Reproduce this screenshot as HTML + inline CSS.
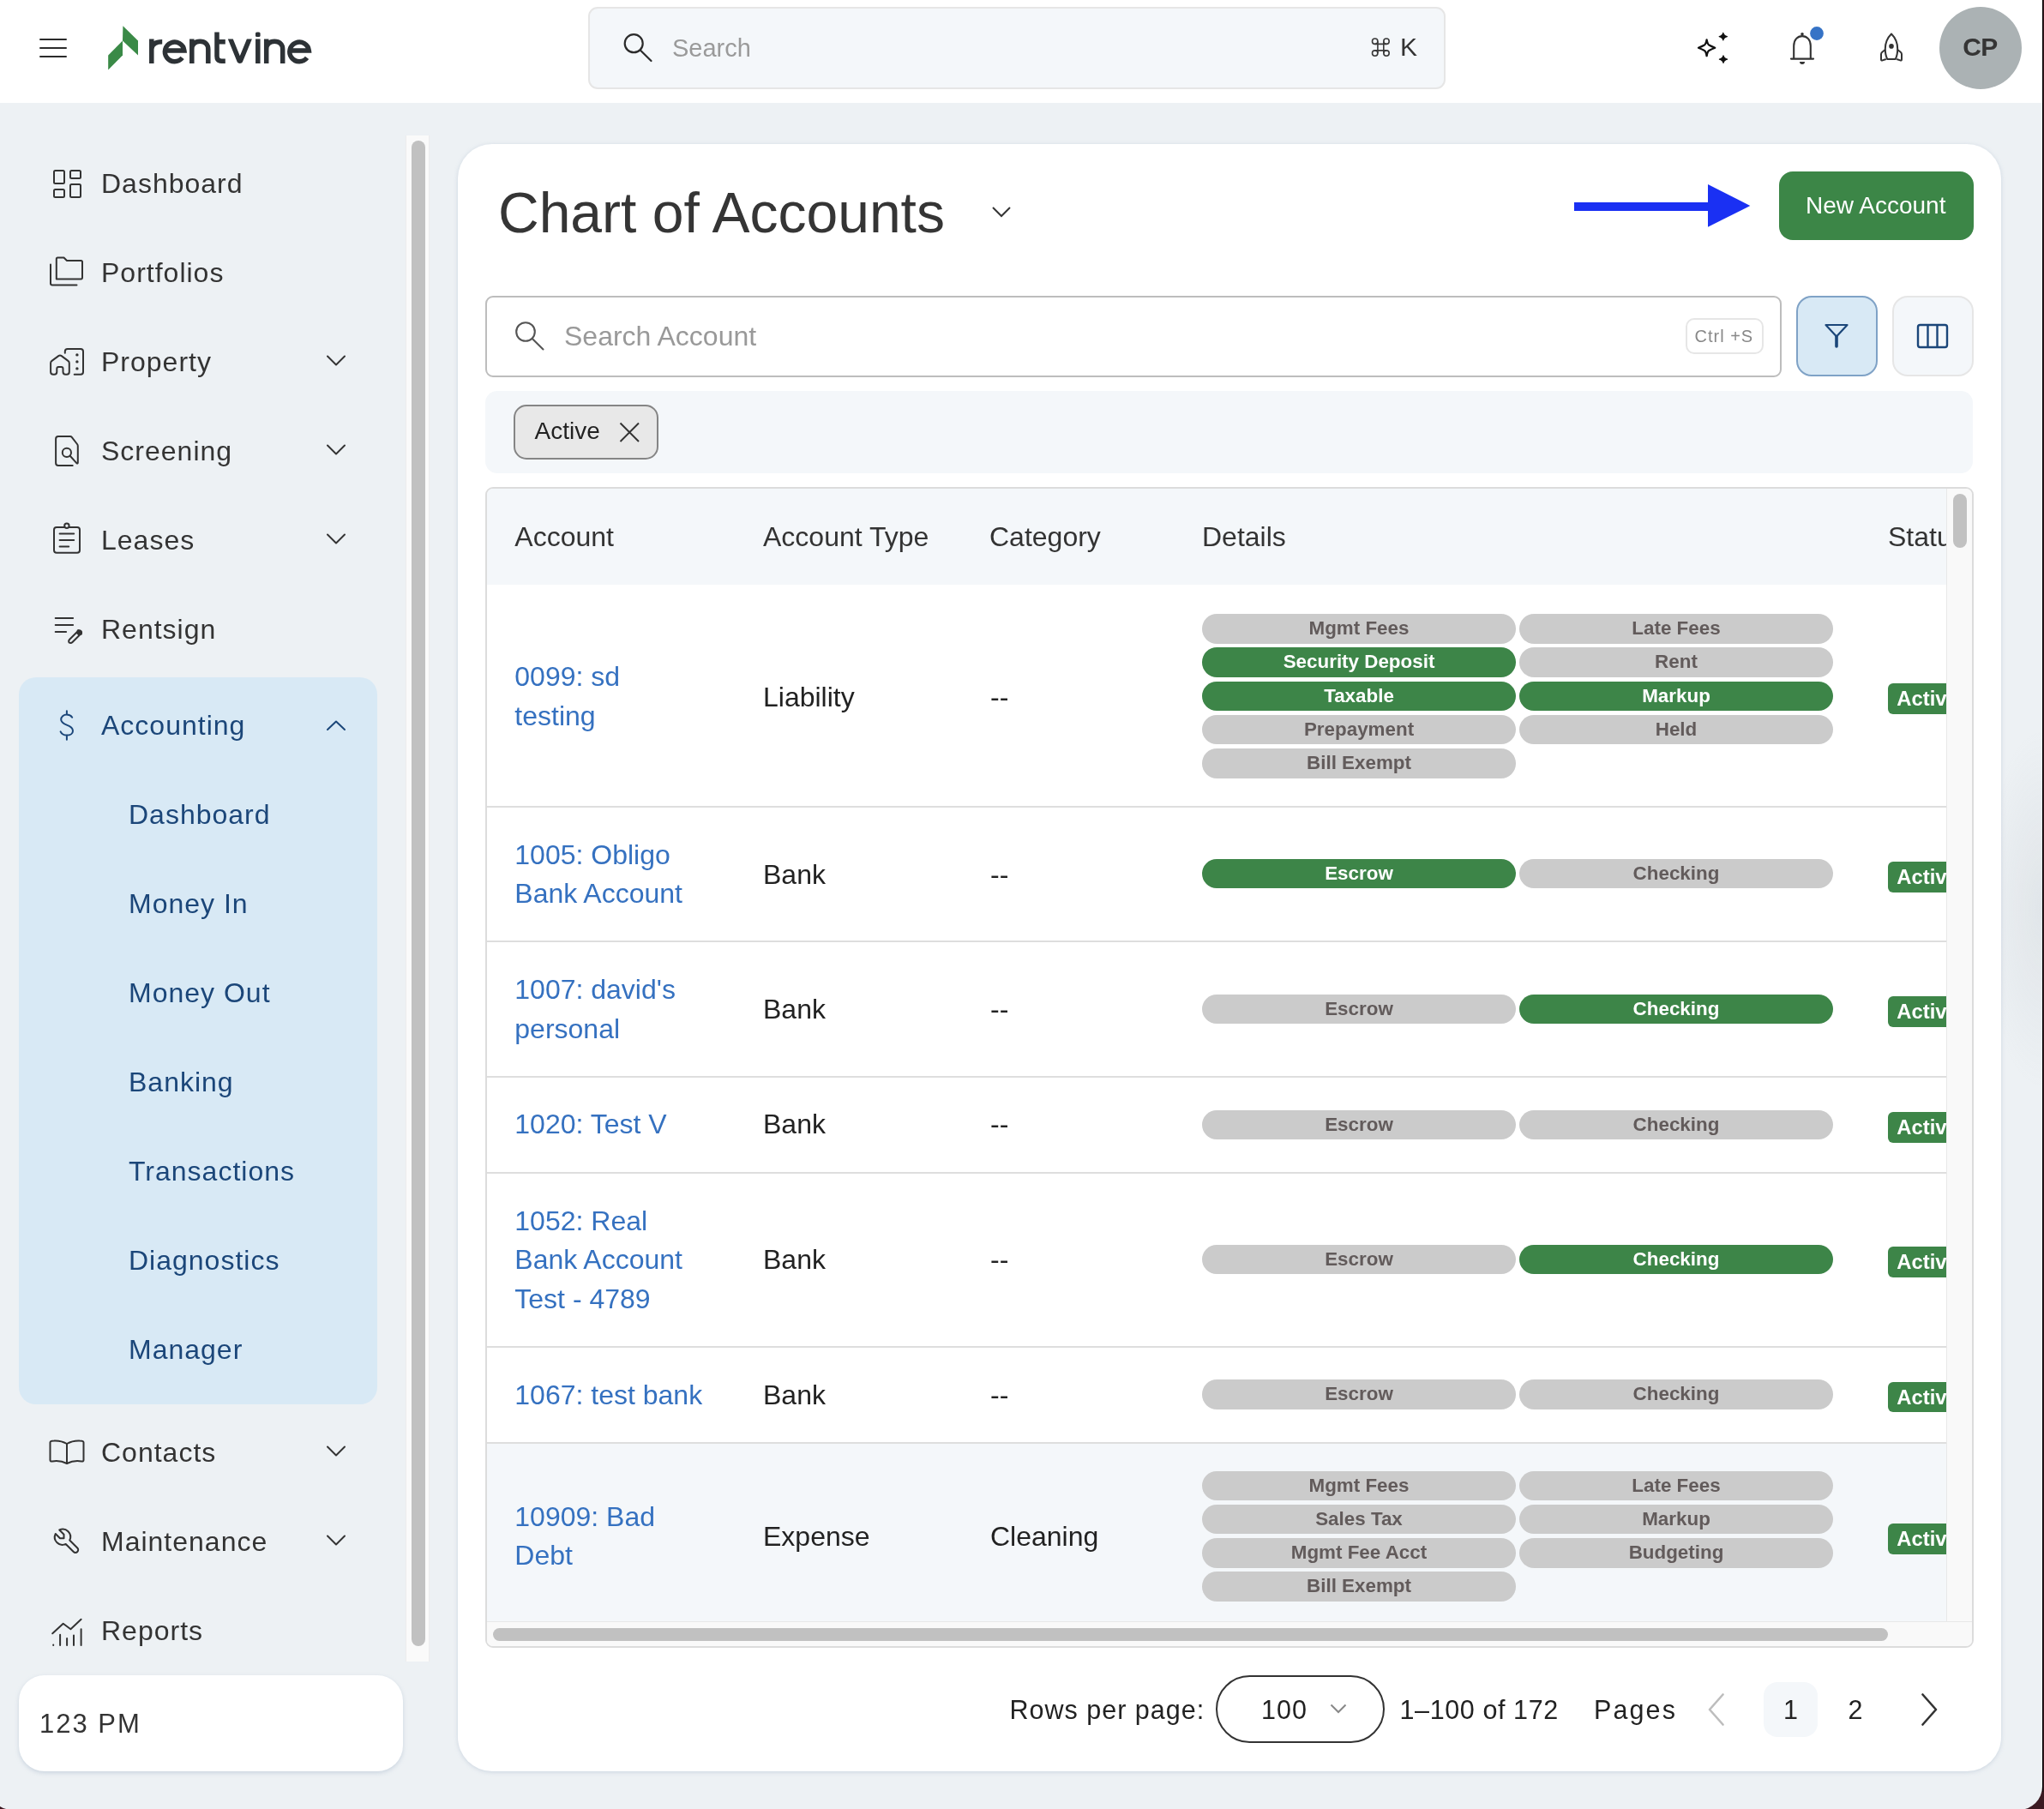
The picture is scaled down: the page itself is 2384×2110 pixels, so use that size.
<!DOCTYPE html>
<html><head><meta charset="utf-8"><style>
html,body{margin:0;padding:0;width:2384px;height:2110px;overflow:hidden;background:#3b1a22}
.win{position:absolute;left:-13px;top:0;width:2395px;height:2111px;background:#edf1f4;border-radius:0 0 27px 27px;overflow:hidden}
.inner{position:absolute;left:13px;top:0;width:2382px;height:2111px;will-change:transform}
.t{position:absolute;white-space:nowrap;font-family:'Liberation Sans', sans-serif}
</style></head><body>
<div style="position:absolute;left:2381.5px;top:0;width:1.5px;height:2090px;background:#000"></div>
<div class="win"><div class="inner">
<div style="position:absolute;left:0px;top:0px;width:2382px;height:120px;background:#fff"></div><div style="position:absolute;left:46px;top:45.2px;width:32px;height:2.200000000000003px;background:#2b2b2b;border-radius:2px"></div><div style="position:absolute;left:46px;top:55px;width:32px;height:2.200000000000003px;background:#2b2b2b;border-radius:2px"></div><div style="position:absolute;left:46px;top:64.5px;width:32px;height:2.200000000000003px;background:#2b2b2b;border-radius:2px"></div><svg style="position:absolute;left:120px;top:25px;" width="50" height="62" viewBox="0 0 50 62"><path d="M23.4 5.3 L41 22.4 L41 39.5 L23 22.4 Z" fill="#3a8a47"/><path d="M23 22.4 L23 39.5 L6.2 56.6 L6.2 39.5 Z" fill="#3a8a47"/></svg><svg style="position:absolute;left:165px;top:30px;" width="205" height="55" viewBox="0 0 205 55"><g fill="none" stroke="#2d3236" stroke-width="5.5"><path d="M11.8 73.9 L11.8 45.6 M11.8 57 Q12.5 48.7 24.2 48.7" transform="translate(0,-30)"/><path d="M27.6 59 L49.9 59 A11.3 11.3 0 1 0 47.6 67.4" transform="translate(0,-30)"/><path d="M58.8 73.9 L58.8 45.6 M58.8 57.5 C58.8 51.5 62.5 48.25 68.3 48.25 C74.1 48.25 77.8 51.5 77.8 57.5 L77.8 73.9" transform="translate(0,-30)"/><path d="M88 37.5 L88 65.5 Q88 71.2 93.5 71.2 L97.8 71.2 M85.3 48.7 L97.8 48.7" transform="translate(0,-30)"/></g><path d="M100.8 15.5 L106.8 15.5 L114.8 35.2 L122.9 15.5 L128.9 15.5 L117.8 42.6 Q117 43.9 114.8 43.9 Q112.6 43.9 111.8 42.6 Z" fill="#2d3236"/><g fill="none" stroke="#2d3236" stroke-width="5.5"><path d="M135.8 45.6 L135.8 73.9 M145.7 73.9 L145.7 45.6 M145.7 57.5 C145.7 51.5 149.4 48.25 155.2 48.25 C161 48.25 164.7 51.5 164.7 57.5 L164.7 73.9" transform="translate(0,-30)"/><path d="M173.1 59 L195.35 59 A11.3 11.3 0 1 0 193.05 67.4" transform="translate(0,-30)"/></g><rect x="133" y="7.5" width="5.6" height="5.5" rx="1.6" fill="#2d3236"/></svg><div style="position:absolute;left:686px;top:8px;width:1000px;height:96px;box-sizing:border-box;border:2px solid #e6e6e6;background:#f4f7fa;border-radius:11px"></div><svg style="position:absolute;left:724px;top:36px;" width="40" height="40" viewBox="0 0 40 40"><circle cx="15.2" cy="14.7" r="10.5" fill="none" stroke="#2b2b2b" stroke-width="2.2"/><path d="M22.8 22.5 L35.5 35" stroke="#2b2b2b" stroke-width="2.2" stroke-linecap="round"/></svg><div class="t" style="left:784.0px;top:41.9px;font-size:29px;line-height:29px;color:#9a9a9a;font-weight:400;letter-spacing:0px;">Search</div><svg style="position:absolute;left:1598px;top:43px;" width="25" height="25" viewBox="0 0 25 25"><g fill="none" stroke="#3a3a3a" stroke-width="1.6"><path d="M8.9 5.2 L8.9 19.1 M15.8 5.2 L15.8 19.1 M5.7 8.4 L19 8.4 M5.7 15.9 L19 15.9"/><circle cx="5.7" cy="5.2" r="3.2"/><circle cx="19" cy="5.2" r="3.2"/><circle cx="5.7" cy="19.1" r="3.2"/><circle cx="19" cy="19.1" r="3.2"/></g></svg><div class="t" style="left:1633.0px;top:39.6px;font-size:30px;line-height:30px;color:#333;font-weight:400;letter-spacing:0px;">K</div><svg style="position:absolute;left:1975px;top:35px;" width="45" height="45" viewBox="0 0 45 45"><path d="M15.6 11.4 Q16.6 17 18.7 17.8 Q21 19.1 25.2 20.8 Q21 22.5 18.7 23.8 Q16.6 24.6 15.6 30.2 Q14.6 24.6 12.5 23.8 Q10.2 22.5 6 20.8 Q10.2 19.1 12.5 17.8 Q14.6 17 15.6 11.4 Z" fill="none" stroke="#111" stroke-width="2.3" stroke-linejoin="round"/><path d="M34.8 3.4 Q35.3 6.6 39.4 7.7 Q35.3 8.8 34.8 12 Q34.3 8.8 30.2 7.7 Q34.3 6.6 34.8 3.4 Z" fill="#111" stroke="#111" stroke-width="1.2" stroke-linejoin="round"/><path d="M35 29.9 Q35.5 33.1 39.6 34.2 Q35.5 35.3 35 38.5 Q34.5 35.3 30.4 34.2 Q34.5 33.1 35 29.9 Z" fill="#111" stroke="#111" stroke-width="1.2" stroke-linejoin="round"/></svg><svg style="position:absolute;left:2080px;top:30px;" width="50" height="50" viewBox="0 0 50 50"><path d="M12.2 38.6 L12.2 23.5 C12.2 16.5 16.5 12.1 22 12.1 C27.5 12.1 31.8 16.5 31.8 23.5 L31.8 38.6" fill="none" stroke="#333" stroke-width="2.1"/><path d="M9 38.6 L35 38.6" stroke="#333" stroke-width="2.2" stroke-linecap="round"/><path d="M19 41.9 L25 41.9 A3 3 0 0 1 19 41.9 Z" fill="#333"/><circle cx="22" cy="9.8" r="1.8" fill="#333"/><circle cx="39" cy="9" r="7.9" fill="#3673c6"/></svg><svg style="position:absolute;left:2185px;top:33px;" width="42" height="44" viewBox="0 0 42 44"><path d="M21 6.5 C25.5 11 28.2 17 28.2 24 C28.2 29 27.3 33 25.7 36 L16.3 36 C14.7 33 13.8 29 13.8 24 C13.8 17 16.5 11 21 6.5 Z" fill="none" stroke="#333" stroke-width="2" stroke-linejoin="round"/><circle cx="21" cy="20.9" r="2.8" fill="#333"/><path d="M13.8 25 L10.3 27.7 Q9 28.7 9 30.3 L9 36.3 Q9 38 10.7 37.4 L14.8 36" fill="none" stroke="#333" stroke-width="2" stroke-linejoin="round"/><path d="M28.2 25 L31.7 27.7 Q33 28.7 33 30.3 L33 36.3 Q33 38 31.3 37.4 L27.2 36" fill="none" stroke="#333" stroke-width="2" stroke-linejoin="round"/></svg><div style="position:absolute;left:2262px;top:8px;width:96px;height:96px;background:#abb2b4;border-radius:50%"></div><div class="t" style="left:2289.3px;top:39.8px;font-size:30px;line-height:30px;color:#353535;font-weight:700;letter-spacing:-0.6px;">CP</div><div style="position:absolute;left:472.6px;top:157.7px;width:28.899999999999977px;height:1780.3px;background:#fafafa;border-left:1.5px solid #ececec;border-right:1.5px solid #ececec;box-sizing:border-box"></div><div style="position:absolute;left:480px;top:164px;width:16px;height:1756px;background:#c1c1c1;border-radius:8px"></div><div class="t" style="left:118.0px;top:198.1px;font-size:32px;line-height:32px;color:#333;font-weight:400;letter-spacing:1px;">Dashboard</div><div class="t" style="left:118.0px;top:301.8px;font-size:32px;line-height:32px;color:#333;font-weight:400;letter-spacing:1px;">Portfolios</div><div class="t" style="left:118.0px;top:406.3px;font-size:32px;line-height:32px;color:#333;font-weight:400;letter-spacing:1px;">Property</div><div class="t" style="left:118.0px;top:509.8px;font-size:32px;line-height:32px;color:#333;font-weight:400;letter-spacing:1px;">Screening</div><div class="t" style="left:118.0px;top:613.5px;font-size:32px;line-height:32px;color:#333;font-weight:400;letter-spacing:1px;">Leases</div><div class="t" style="left:118.0px;top:717.8px;font-size:32px;line-height:32px;color:#333;font-weight:400;letter-spacing:1px;">Rentsign</div><svg style="position:absolute;left:378px;top:412.4px;" width="28" height="16" viewBox="0 0 28 16"><path d="M4 3.5 L14 13.5 L24 3.5" fill="none" stroke="#333" stroke-width="2" stroke-linecap="round" stroke-linejoin="round"/></svg><svg style="position:absolute;left:378px;top:515.9px;" width="28" height="16" viewBox="0 0 28 16"><path d="M4 3.5 L14 13.5 L24 3.5" fill="none" stroke="#333" stroke-width="2" stroke-linecap="round" stroke-linejoin="round"/></svg><svg style="position:absolute;left:378px;top:619.6px;" width="28" height="16" viewBox="0 0 28 16"><path d="M4 3.5 L14 13.5 L24 3.5" fill="none" stroke="#333" stroke-width="2" stroke-linecap="round" stroke-linejoin="round"/></svg><svg style="position:absolute;left:58px;top:194px;" width="40" height="40" viewBox="0 0 40 40"><rect x="5" y="5" width="12" height="15" rx="1.5" fill="none" stroke="#333" stroke-width="2" stroke-linejoin="round" stroke-linecap="round"/><rect x="24" y="5" width="12" height="9" rx="1.5" fill="none" stroke="#333" stroke-width="2" stroke-linejoin="round" stroke-linecap="round"/><rect x="5" y="27" width="12" height="9" rx="1.5" fill="none" stroke="#333" stroke-width="2" stroke-linejoin="round" stroke-linecap="round"/><rect x="24" y="21" width="12" height="15" rx="1.5" fill="none" stroke="#333" stroke-width="2" stroke-linejoin="round" stroke-linecap="round"/></svg><svg style="position:absolute;left:56px;top:296px;" width="44" height="40" viewBox="0 0 44 40"><path d="M9.8 29.5 L9.8 6 Q9.8 4.5 11.3 4.5 L18.5 4.5 L22 8 L38.5 8 Q40 8 40 9.5 L40 27.5 Q40 29.5 38.5 29.5 Z" fill="none" stroke="#333" stroke-width="2" stroke-linejoin="round" stroke-linecap="round"/><path d="M3 12.5 L3 34.5 Q3 36.5 5 36.5 L33.5 36.5" fill="none" stroke="#333" stroke-width="2" stroke-linejoin="round" stroke-linecap="round"/></svg><svg style="position:absolute;left:55px;top:402px;" width="46" height="40" viewBox="0 0 46 40"><path d="M7.1 34.8 Q4.1 34.8 4.1 31.8 L4.1 21.6 Q4.1 19.9 5.5 18.9 L13.3 13.1 Q15 11.9 16.7 13.1 L24.4 18.9 Q25.8 19.9 25.8 21.6 L25.8 31.8 Q25.8 34.8 22.8 34.8 L21.5 34.8 Q18.5 34.8 18.5 31.8 L18.5 28 Q18.5 26 16.5 26 L13.3 26 Q11.3 26 11.3 28 L11.3 31.8 Q11.3 34.8 8.3 34.8 Z" fill="none" stroke="#333" stroke-width="2" stroke-linejoin="round" stroke-linecap="round"/><path d="M20.8 9.7 L20.8 8 Q20.8 5 23.8 5 L39 5 Q42 5 42 8 L42 31.8 Q42 34.8 39 34.8 L31.7 34.8" fill="none" stroke="#333" stroke-width="2" stroke-linejoin="round" stroke-linecap="round"/><circle cx="34.9" cy="11.9" r="1.7" fill="#333"/><circle cx="34.9" cy="19.9" r="1.7" fill="#333"/><circle cx="34.9" cy="27.9" r="1.7" fill="#333"/></svg><svg style="position:absolute;left:60px;top:504px;" width="36" height="44" viewBox="0 0 36 44"><path d="M24.7 39 L8 39 Q5.1 39 5.1 36 L5.1 8 Q5.1 5 8 5 L22 5 Q23 5 23.7 5.8 L30 14 Q30.8 15 30.8 16.3 L30.8 35.5 Q30.8 37.3 29.3 36.2 L21.5 27.5" fill="none" stroke="#333" stroke-width="2" stroke-linejoin="round" stroke-linecap="round"/><circle cx="17.9" cy="23.9" r="5.1" fill="none" stroke="#333" stroke-width="2" stroke-linejoin="round" stroke-linecap="round"/></svg><svg style="position:absolute;left:58px;top:606px;" width="40" height="44" viewBox="0 0 40 44"><rect x="5" y="8.9" width="30" height="29.9" rx="3" fill="none" stroke="#333" stroke-width="2" stroke-linejoin="round" stroke-linecap="round"/><circle cx="19.9" cy="7.3" r="2.7" fill="#edf1f4" stroke="#333" stroke-width="2"/><path d="M11.6 16.5 L28.2 16.5 M11.6 23.9 L28.2 23.9 M11.6 31.5 L22.2 31.5" fill="none" stroke="#333" stroke-width="2" stroke-linejoin="round" stroke-linecap="round"/></svg><svg style="position:absolute;left:58px;top:715px;" width="42" height="38" viewBox="0 0 42 38"><path d="M6.7 5.9 L27.1 5.9 M6.7 13.9 L27.1 13.9 M6.7 22 L19.1 22" fill="none" stroke="#333" stroke-width="2" stroke-linejoin="round" stroke-linecap="round"/><path d="M22.6 34.5 Q21.5 32.5 23.2 30.8 L33 21 Q34.6 19.4 36.3 21 Q37.9 22.6 36.3 24.2 L26.5 34 Q24.7 35.8 22.6 34.5 Z" fill="none" stroke="#333" stroke-width="2" stroke-linejoin="round" stroke-linecap="round"/><path d="M31.8 22.3 L35.2 25.7" stroke="#333" stroke-width="3.2"/><path d="M33.2 20.8 L36.4 24" stroke="#333" stroke-width="3.2" stroke-linecap="round"/></svg><div style="position:absolute;left:22px;top:790px;width:418px;height:848px;background:#d8e9f5;border-radius:20px"></div><div class="t" style="left:118.0px;top:830.3px;font-size:32px;line-height:32px;color:#1b4679;font-weight:400;letter-spacing:1px;">Accounting</div><svg style="position:absolute;left:60px;top:824px;" width="36" height="44" viewBox="0 0 36 44"><path d="M24.2 12.7 C22.8 10.6 20.6 9.6 17.9 9.6 C14 9.6 11.2 12 11.2 15.3 C11.2 19 14.5 20.3 17.9 21.6 C21.8 23 25 24.6 25 28.4 C25 31.6 22 33.6 17.9 33.6 C14.5 33.6 11.8 32 10.6 29.4 M17.9 5.3 L17.9 9.6 M17.9 33.6 L17.9 38.7" fill="none" stroke="#1b4679" stroke-width="2" stroke-linecap="round"/></svg><svg style="position:absolute;left:376px;top:831px;" width="32" height="28" viewBox="0 0 32 28"><path d="M6 20 L16 10.5 L26 20" fill="none" stroke="#1b4679" stroke-width="2" stroke-linecap="round" stroke-linejoin="round"/></svg><div class="t" style="left:150.0px;top:934.4px;font-size:32px;line-height:32px;color:#1b4679;font-weight:400;letter-spacing:1px;">Dashboard</div><div class="t" style="left:150.0px;top:1038.4px;font-size:32px;line-height:32px;color:#1b4679;font-weight:400;letter-spacing:1px;">Money In</div><div class="t" style="left:150.0px;top:1142.4px;font-size:32px;line-height:32px;color:#1b4679;font-weight:400;letter-spacing:1px;">Money Out</div><div class="t" style="left:150.0px;top:1246.4px;font-size:32px;line-height:32px;color:#1b4679;font-weight:400;letter-spacing:1px;">Banking</div><div class="t" style="left:150.0px;top:1350.4px;font-size:32px;line-height:32px;color:#1b4679;font-weight:400;letter-spacing:1px;">Transactions</div><div class="t" style="left:150.0px;top:1454.4px;font-size:32px;line-height:32px;color:#1b4679;font-weight:400;letter-spacing:1px;">Diagnostics</div><div class="t" style="left:150.0px;top:1558.4px;font-size:32px;line-height:32px;color:#1b4679;font-weight:400;letter-spacing:1px;">Manager</div><div class="t" style="left:118.0px;top:1677.6px;font-size:32px;line-height:32px;color:#333;font-weight:400;letter-spacing:1px;">Contacts</div><div class="t" style="left:118.0px;top:1781.5px;font-size:32px;line-height:32px;color:#333;font-weight:400;letter-spacing:1px;">Maintenance</div><div class="t" style="left:118.0px;top:1885.9px;font-size:32px;line-height:32px;color:#333;font-weight:400;letter-spacing:1px;">Reports</div><svg style="position:absolute;left:378px;top:1683.7px;" width="28" height="16" viewBox="0 0 28 16"><path d="M4 3.5 L14 13.5 L24 3.5" fill="none" stroke="#333" stroke-width="2" stroke-linecap="round" stroke-linejoin="round"/></svg><svg style="position:absolute;left:378px;top:1787.6px;" width="28" height="16" viewBox="0 0 28 16"><path d="M4 3.5 L14 13.5 L24 3.5" fill="none" stroke="#333" stroke-width="2" stroke-linecap="round" stroke-linejoin="round"/></svg><svg style="position:absolute;left:55px;top:1676px;" width="46" height="36" viewBox="0 0 46 36"><path d="M3.5 6.5 Q3.5 4.5 8 4.5 Q16 4 23 8 Q30 4 38 4.5 Q42.5 4.5 42.5 6.5 L42.5 27 Q42.5 29 40 28.5 Q31 27 23 31 Q15 27 6 28.5 Q3.5 29 3.5 27 Z" fill="none" stroke="#333" stroke-width="2" stroke-linejoin="round" stroke-linecap="round"/><path d="M23 8 L23 31" fill="none" stroke="#333" stroke-width="2" stroke-linejoin="round" stroke-linecap="round"/></svg><svg style="position:absolute;left:57px;top:1777px;" width="42" height="42" viewBox="0 0 42 42"><g transform="translate(2.5,2.2) scale(1.5)"><path d="M7 10h3v-3l-3.5 -3.5a6 6 0 0 1 8 8l6 6a2 2 0 0 1 -3 3l-6 -6a6 6 0 0 1 -8 -8l3.5 3.5" fill="none" stroke="#333" stroke-width="1.35" stroke-linecap="round" stroke-linejoin="round"/></g></svg><svg style="position:absolute;left:57px;top:1884px;" width="42" height="40" viewBox="0 0 42 40"><path d="M4.2 21.3 L16.7 9.7 L25.4 16.2 L37.6 4.7" fill="none" stroke="#333" stroke-width="2" stroke-linejoin="round" stroke-linecap="round"/><path d="M5.2 34.5 L5.2 35 M13.1 35 L13.1 22.7 M21.1 35 L21.1 27 M29 35 L29 23.4 M37.6 35 L37.6 16.2" fill="none" stroke="#333" stroke-width="2" stroke-linejoin="round" stroke-linecap="round"/></svg><div style="position:absolute;left:22px;top:1954px;width:448px;height:112px;background:#fff;border-radius:30px;box-shadow:0 2px 5px rgba(140,160,185,0.35)"></div><div class="t" style="left:46.0px;top:1995.1px;font-size:31px;line-height:31px;color:#333;font-weight:400;letter-spacing:2px;">123 PM</div><div style="position:absolute;left:2300px;top:850px;width:82px;height:420px;background:radial-gradient(ellipse 70px 210px at 100% 50%, rgba(120,130,140,0.10), rgba(120,130,140,0))"></div><div style="position:absolute;left:533.5px;top:167.5px;width:1800.5px;height:1898.5px;background:#fff;border-radius:40px;box-shadow:0 1px 5px rgba(140,160,185,0.35)"></div><div class="t" style="left:581.0px;top:215.1px;font-size:66px;line-height:66px;color:#353535;font-weight:400;letter-spacing:0px;">Chart of Accounts</div><svg style="position:absolute;left:1152px;top:236px;" width="32" height="24" viewBox="0 0 32 24"><path d="M6 6 L16 16 L26 6" fill="none" stroke="#353535" stroke-width="2"/></svg><div style="position:absolute;left:1836px;top:236px;width:158px;height:10px;background:#1a30f3"></div><svg style="position:absolute;left:1990px;top:213px;" width="54" height="54" viewBox="0 0 54 54"><path d="M2 2 L51.3 27 L2 51.7 Z" fill="#1a30f3"/></svg><div style="position:absolute;left:2075px;top:200px;width:227px;height:80px;background:#3c8647;border-radius:16px"></div><div class="t" style="left:2106.0px;top:226.3px;font-size:28px;line-height:28px;color:#fff;font-weight:400;letter-spacing:0px;">New Account</div><div style="position:absolute;left:566px;top:344.5px;width:1512px;height:95.0px;box-sizing:border-box;border:2px solid #bdbdbd;border-radius:9px;background:#fff"></div><svg style="position:absolute;left:595px;top:370px;" width="44" height="44" viewBox="0 0 44 44"><circle cx="18" cy="17" r="10.8" fill="none" stroke="#555" stroke-width="2.1"/><path d="M25.8 25 L38.5 37.5" stroke="#555" stroke-width="2.1" stroke-linecap="round"/></svg><div class="t" style="left:658.0px;top:376.2px;font-size:32px;line-height:32px;color:#999;font-weight:400;letter-spacing:0px;">Search Account</div><div style="position:absolute;left:1966px;top:371px;width:91px;height:42px;box-sizing:border-box;border:2px solid #e6e6e6;border-radius:10px"></div><div class="t" style="left:1976.5px;top:381.6px;font-size:20px;line-height:20px;color:#888;font-weight:400;letter-spacing:1px;">Ctrl +S</div><div style="position:absolute;left:2094.5px;top:344.5px;width:95.0px;height:94.5px;box-sizing:border-box;border:2px solid #7fa2c6;border-radius:18px;background:#d8e9f5"></div><svg style="position:absolute;left:2124px;top:373px;" width="36" height="36" viewBox="0 0 36 36"><path d="M5.5 6 L30.5 6 L18 19.5 Z" fill="none" stroke="#1b4679" stroke-width="2.2" stroke-linejoin="round"/><path d="M18 19.5 L18 31" stroke="#1b4679" stroke-width="3.6" stroke-linecap="round"/></svg><div style="position:absolute;left:2206.5px;top:344.5px;width:95.0px;height:94.5px;box-sizing:border-box;border:2px solid #e6e6e6;border-radius:18px;background:#f4f7fa"></div><svg style="position:absolute;left:2232px;top:374px;" width="44" height="36" viewBox="0 0 44 36"><rect x="5" y="5" width="34" height="26" rx="2.5" fill="none" stroke="#1b4679" stroke-width="2.4"/><path d="M16.5 5 L16.5 31 M27.5 5 L27.5 31" stroke="#1b4679" stroke-width="2.4"/></svg><div style="position:absolute;left:566px;top:456px;width:1735px;height:96px;background:#f4f7fa;border-radius:14px"></div><div style="position:absolute;left:598.5px;top:471.8px;width:169.0px;height:63.80000000000001px;box-sizing:border-box;border:2px solid #858585;border-radius:15px;background:#e8e8e8"></div><div class="t" style="left:623.5px;top:488.5px;font-size:28px;line-height:28px;color:#222;font-weight:400;letter-spacing:0px;">Active</div><svg style="position:absolute;left:718px;top:488px;" width="32" height="32" viewBox="0 0 32 32"><path d="M5.5 5.5 L27 27 M27 5.5 L5.5 27" stroke="#333" stroke-width="2"/></svg><div style="position:absolute;left:566px;top:568px;width:1736px;height:1354px;box-sizing:border-box;border:2px solid #dcdcdc;border-radius:9px;overflow:hidden;background:#fff"><div style="position:absolute;left:-568px;top:-570px;width:2384px;height:2110px"><div style="position:absolute;left:568px;top:570px;width:1702px;height:111.5px;background:#f4f7fa"></div><div class="t" style="left:600.3px;top:610.0px;font-size:32px;line-height:32px;color:#333;font-weight:400;letter-spacing:0px;">Account</div><div class="t" style="left:890.0px;top:610.0px;font-size:32px;line-height:32px;color:#333;font-weight:400;letter-spacing:0px;">Account Type</div><div class="t" style="left:1154.0px;top:610.0px;font-size:32px;line-height:32px;color:#333;font-weight:400;letter-spacing:0px;">Category</div><div class="t" style="left:1402.0px;top:610.0px;font-size:32px;line-height:32px;color:#333;font-weight:400;letter-spacing:0px;">Details</div><div class="t" style="left:2202.0px;top:610.0px;font-size:32px;line-height:32px;color:#333;font-weight:400;letter-spacing:0px;">Status</div><div style="position:absolute;left:568px;top:940px;width:1702px;height:2px;background:#dedede"></div><div style="position:absolute;left:568px;top:1096.7px;width:1702px;height:2.0px;background:#dedede"></div><div style="position:absolute;left:568px;top:1254.9px;width:1702px;height:2.0px;background:#dedede"></div><div style="position:absolute;left:568px;top:1366.7px;width:1702px;height:2.0px;background:#dedede"></div><div style="position:absolute;left:568px;top:1569.9px;width:1702px;height:2.0px;background:#dedede"></div><div style="position:absolute;left:568px;top:1681.6px;width:1702px;height:2.0px;background:#dedede"></div><div style="position:absolute;left:568px;top:1683.6px;width:1702px;height:207.4000000000001px;background:#f4f7fa"></div><div class="t" style="left:600.3px;top:772.9px;font-size:32px;line-height:32px;color:#3571c0;font-weight:400;letter-spacing:0px;">0099: sd</div><div class="t" style="left:600.3px;top:819.4px;font-size:32px;line-height:32px;color:#3571c0;font-weight:400;letter-spacing:0px;">testing</div><div class="t" style="left:890.0px;top:796.8px;font-size:32px;line-height:32px;color:#222;font-weight:400;letter-spacing:0px;">Liability</div><div class="t" style="left:1155.0px;top:796.8px;font-size:32px;line-height:32px;color:#222;font-weight:400;letter-spacing:0px;">--</div><div class="t" style="left:600.3px;top:980.9px;font-size:32px;line-height:32px;color:#3571c0;font-weight:400;letter-spacing:0px;">1005: Obligo</div><div class="t" style="left:600.3px;top:1026.2px;font-size:32px;line-height:32px;color:#3571c0;font-weight:400;letter-spacing:0px;">Bank Account</div><div class="t" style="left:890.0px;top:1003.6px;font-size:32px;line-height:32px;color:#222;font-weight:400;letter-spacing:0px;">Bank</div><div class="t" style="left:1155.0px;top:1003.6px;font-size:32px;line-height:32px;color:#222;font-weight:400;letter-spacing:0px;">--</div><div class="t" style="left:600.3px;top:1137.9px;font-size:32px;line-height:32px;color:#3571c0;font-weight:400;letter-spacing:0px;">1007: david's</div><div class="t" style="left:600.3px;top:1184.4px;font-size:32px;line-height:32px;color:#3571c0;font-weight:400;letter-spacing:0px;">personal</div><div class="t" style="left:890.0px;top:1160.9px;font-size:32px;line-height:32px;color:#222;font-weight:400;letter-spacing:0px;">Bank</div><div class="t" style="left:1155.0px;top:1160.9px;font-size:32px;line-height:32px;color:#222;font-weight:400;letter-spacing:0px;">--</div><div class="t" style="left:600.3px;top:1295.4px;font-size:32px;line-height:32px;color:#3571c0;font-weight:400;letter-spacing:0px;">1020: Test V</div><div class="t" style="left:890.0px;top:1295.4px;font-size:32px;line-height:32px;color:#222;font-weight:400;letter-spacing:0px;">Bank</div><div class="t" style="left:1155.0px;top:1295.4px;font-size:32px;line-height:32px;color:#222;font-weight:400;letter-spacing:0px;">--</div><div class="t" style="left:600.3px;top:1408.1px;font-size:32px;line-height:32px;color:#3571c0;font-weight:400;letter-spacing:0px;">1052: Real</div><div class="t" style="left:600.3px;top:1453.3px;font-size:32px;line-height:32px;color:#3571c0;font-weight:400;letter-spacing:0px;">Bank Account</div><div class="t" style="left:600.3px;top:1498.5px;font-size:32px;line-height:32px;color:#3571c0;font-weight:400;letter-spacing:0px;">Test - 4789</div><div class="t" style="left:890.0px;top:1452.9px;font-size:32px;line-height:32px;color:#222;font-weight:400;letter-spacing:0px;">Bank</div><div class="t" style="left:1155.0px;top:1452.9px;font-size:32px;line-height:32px;color:#222;font-weight:400;letter-spacing:0px;">--</div><div class="t" style="left:600.3px;top:1611.2px;font-size:32px;line-height:32px;color:#3571c0;font-weight:400;letter-spacing:0px;">1067: test bank</div><div class="t" style="left:890.0px;top:1611.2px;font-size:32px;line-height:32px;color:#222;font-weight:400;letter-spacing:0px;">Bank</div><div class="t" style="left:1155.0px;top:1611.2px;font-size:32px;line-height:32px;color:#222;font-weight:400;letter-spacing:0px;">--</div><div class="t" style="left:600.3px;top:1752.9px;font-size:32px;line-height:32px;color:#3571c0;font-weight:400;letter-spacing:0px;">10909: Bad</div><div class="t" style="left:600.3px;top:1798.2px;font-size:32px;line-height:32px;color:#3571c0;font-weight:400;letter-spacing:0px;">Debt</div><div class="t" style="left:890.0px;top:1775.9px;font-size:32px;line-height:32px;color:#222;font-weight:400;letter-spacing:0px;">Expense</div><div class="t" style="left:1155.0px;top:1775.9px;font-size:32px;line-height:32px;color:#222;font-weight:400;letter-spacing:0px;">Cleaning</div><div style="position:absolute;left:1402px;top:716.0px;width:366px;height:34.6px;border-radius:17.3px;background:#cbcbcb;color:#625b5b;font-family:'Liberation Sans', sans-serif;font-weight:700;font-size:22.4px;line-height:34.6px;text-align:center">Mgmt Fees</div><div style="position:absolute;left:1772px;top:716.0px;width:366px;height:34.6px;border-radius:17.3px;background:#cbcbcb;color:#625b5b;font-family:'Liberation Sans', sans-serif;font-weight:700;font-size:22.4px;line-height:34.6px;text-align:center">Late Fees</div><div style="position:absolute;left:1402px;top:755.3px;width:366px;height:34.6px;border-radius:17.3px;background:#3d8548;color:#fff;font-family:'Liberation Sans', sans-serif;font-weight:700;font-size:22.4px;line-height:34.6px;text-align:center">Security Deposit</div><div style="position:absolute;left:1772px;top:755.3px;width:366px;height:34.6px;border-radius:17.3px;background:#cbcbcb;color:#625b5b;font-family:'Liberation Sans', sans-serif;font-weight:700;font-size:22.4px;line-height:34.6px;text-align:center">Rent</div><div style="position:absolute;left:1402px;top:794.5px;width:366px;height:34.6px;border-radius:17.3px;background:#3d8548;color:#fff;font-family:'Liberation Sans', sans-serif;font-weight:700;font-size:22.4px;line-height:34.6px;text-align:center">Taxable</div><div style="position:absolute;left:1772px;top:794.5px;width:366px;height:34.6px;border-radius:17.3px;background:#3d8548;color:#fff;font-family:'Liberation Sans', sans-serif;font-weight:700;font-size:22.4px;line-height:34.6px;text-align:center">Markup</div><div style="position:absolute;left:1402px;top:833.8px;width:366px;height:34.6px;border-radius:17.3px;background:#cbcbcb;color:#625b5b;font-family:'Liberation Sans', sans-serif;font-weight:700;font-size:22.4px;line-height:34.6px;text-align:center">Prepayment</div><div style="position:absolute;left:1772px;top:833.8px;width:366px;height:34.6px;border-radius:17.3px;background:#cbcbcb;color:#625b5b;font-family:'Liberation Sans', sans-serif;font-weight:700;font-size:22.4px;line-height:34.6px;text-align:center">Held</div><div style="position:absolute;left:1402px;top:873.1px;width:366px;height:34.6px;border-radius:17.3px;background:#cbcbcb;color:#625b5b;font-family:'Liberation Sans', sans-serif;font-weight:700;font-size:22.4px;line-height:34.6px;text-align:center">Bill Exempt</div><div style="position:absolute;left:1402px;top:1001.8px;width:366px;height:34.6px;border-radius:17.3px;background:#3d8548;color:#fff;font-family:'Liberation Sans', sans-serif;font-weight:700;font-size:22.4px;line-height:34.6px;text-align:center">Escrow</div><div style="position:absolute;left:1772px;top:1001.8px;width:366px;height:34.6px;border-radius:17.3px;background:#cbcbcb;color:#625b5b;font-family:'Liberation Sans', sans-serif;font-weight:700;font-size:22.4px;line-height:34.6px;text-align:center">Checking</div><div style="position:absolute;left:1402px;top:1159.8px;width:366px;height:34.6px;border-radius:17.3px;background:#cbcbcb;color:#625b5b;font-family:'Liberation Sans', sans-serif;font-weight:700;font-size:22.4px;line-height:34.6px;text-align:center">Escrow</div><div style="position:absolute;left:1772px;top:1159.8px;width:366px;height:34.6px;border-radius:17.3px;background:#3d8548;color:#fff;font-family:'Liberation Sans', sans-serif;font-weight:700;font-size:22.4px;line-height:34.6px;text-align:center">Checking</div><div style="position:absolute;left:1402px;top:1294.5px;width:366px;height:34.6px;border-radius:17.3px;background:#cbcbcb;color:#625b5b;font-family:'Liberation Sans', sans-serif;font-weight:700;font-size:22.4px;line-height:34.6px;text-align:center">Escrow</div><div style="position:absolute;left:1772px;top:1294.5px;width:366px;height:34.6px;border-radius:17.3px;background:#cbcbcb;color:#625b5b;font-family:'Liberation Sans', sans-serif;font-weight:700;font-size:22.4px;line-height:34.6px;text-align:center">Checking</div><div style="position:absolute;left:1402px;top:1451.9px;width:366px;height:34.6px;border-radius:17.3px;background:#cbcbcb;color:#625b5b;font-family:'Liberation Sans', sans-serif;font-weight:700;font-size:22.4px;line-height:34.6px;text-align:center">Escrow</div><div style="position:absolute;left:1772px;top:1451.9px;width:366px;height:34.6px;border-radius:17.3px;background:#3d8548;color:#fff;font-family:'Liberation Sans', sans-serif;font-weight:700;font-size:22.4px;line-height:34.6px;text-align:center">Checking</div><div style="position:absolute;left:1402px;top:1609.4px;width:366px;height:34.6px;border-radius:17.3px;background:#cbcbcb;color:#625b5b;font-family:'Liberation Sans', sans-serif;font-weight:700;font-size:22.4px;line-height:34.6px;text-align:center">Escrow</div><div style="position:absolute;left:1772px;top:1609.4px;width:366px;height:34.6px;border-radius:17.3px;background:#cbcbcb;color:#625b5b;font-family:'Liberation Sans', sans-serif;font-weight:700;font-size:22.4px;line-height:34.6px;text-align:center">Checking</div><div style="position:absolute;left:1402px;top:1715.5px;width:366px;height:34.6px;border-radius:17.3px;background:#cbcbcb;color:#625b5b;font-family:'Liberation Sans', sans-serif;font-weight:700;font-size:22.4px;line-height:34.6px;text-align:center">Mgmt Fees</div><div style="position:absolute;left:1772px;top:1715.5px;width:366px;height:34.6px;border-radius:17.3px;background:#cbcbcb;color:#625b5b;font-family:'Liberation Sans', sans-serif;font-weight:700;font-size:22.4px;line-height:34.6px;text-align:center">Late Fees</div><div style="position:absolute;left:1402px;top:1754.8px;width:366px;height:34.6px;border-radius:17.3px;background:#cbcbcb;color:#625b5b;font-family:'Liberation Sans', sans-serif;font-weight:700;font-size:22.4px;line-height:34.6px;text-align:center">Sales Tax</div><div style="position:absolute;left:1772px;top:1754.8px;width:366px;height:34.6px;border-radius:17.3px;background:#cbcbcb;color:#625b5b;font-family:'Liberation Sans', sans-serif;font-weight:700;font-size:22.4px;line-height:34.6px;text-align:center">Markup</div><div style="position:absolute;left:1402px;top:1794.0px;width:366px;height:34.6px;border-radius:17.3px;background:#cbcbcb;color:#625b5b;font-family:'Liberation Sans', sans-serif;font-weight:700;font-size:22.4px;line-height:34.6px;text-align:center">Mgmt Fee Acct</div><div style="position:absolute;left:1772px;top:1794.0px;width:366px;height:34.6px;border-radius:17.3px;background:#cbcbcb;color:#625b5b;font-family:'Liberation Sans', sans-serif;font-weight:700;font-size:22.4px;line-height:34.6px;text-align:center">Budgeting</div><div style="position:absolute;left:1402px;top:1833.3px;width:366px;height:34.6px;border-radius:17.3px;background:#cbcbcb;color:#625b5b;font-family:'Liberation Sans', sans-serif;font-weight:700;font-size:22.4px;line-height:34.6px;text-align:center">Bill Exempt</div><div style="position:absolute;left:2202px;top:797.0px;width:120px;height:35.5px;border-radius:6px;background:#3d8548;color:#fff;font-family:'Liberation Sans', sans-serif;font-weight:700;font-size:23.8px;line-height:36.5px;padding-left:10.3px;box-sizing:border-box">Active</div><div style="position:absolute;left:2202px;top:1005.0px;width:120px;height:35.5px;border-radius:6px;background:#3d8548;color:#fff;font-family:'Liberation Sans', sans-serif;font-weight:700;font-size:23.8px;line-height:36.5px;padding-left:10.3px;box-sizing:border-box">Active</div><div style="position:absolute;left:2202px;top:1162.0px;width:120px;height:35.5px;border-radius:6px;background:#3d8548;color:#fff;font-family:'Liberation Sans', sans-serif;font-weight:700;font-size:23.8px;line-height:36.5px;padding-left:10.3px;box-sizing:border-box">Active</div><div style="position:absolute;left:2202px;top:1297.0px;width:120px;height:35.5px;border-radius:6px;background:#3d8548;color:#fff;font-family:'Liberation Sans', sans-serif;font-weight:700;font-size:23.8px;line-height:36.5px;padding-left:10.3px;box-sizing:border-box">Active</div><div style="position:absolute;left:2202px;top:1454.2px;width:120px;height:35.5px;border-radius:6px;background:#3d8548;color:#fff;font-family:'Liberation Sans', sans-serif;font-weight:700;font-size:23.8px;line-height:36.5px;padding-left:10.3px;box-sizing:border-box">Active</div><div style="position:absolute;left:2202px;top:1611.8px;width:120px;height:35.5px;border-radius:6px;background:#3d8548;color:#fff;font-family:'Liberation Sans', sans-serif;font-weight:700;font-size:23.8px;line-height:36.5px;padding-left:10.3px;box-sizing:border-box">Active</div><div style="position:absolute;left:2202px;top:1777.0px;width:120px;height:35.5px;border-radius:6px;background:#3d8548;color:#fff;font-family:'Liberation Sans', sans-serif;font-weight:700;font-size:23.8px;line-height:36.5px;padding-left:10.3px;box-sizing:border-box">Active</div><div style="position:absolute;left:2270px;top:570px;width:30px;height:1321px;background:#f9f9f9;border-left:1.5px solid #e8e8e8;box-sizing:border-box"></div><div style="position:absolute;left:2278px;top:576px;width:16px;height:63px;background:#c1c1c1;border-radius:8px"></div><div style="position:absolute;left:568px;top:1891px;width:1732px;height:31px;background:#f9f9f9;border-top:1.5px solid #e8e8e8;box-sizing:border-box"></div><div style="position:absolute;left:574.5px;top:1898.5px;width:1627.5px;height:15.5px;background:#c1c1c1;border-radius:8px"></div></div></div><div class="t" style="left:1177.5px;top:1978.8px;font-size:30.5px;line-height:30.5px;color:#222;font-weight:400;letter-spacing:1px;">Rows per page:</div><div style="position:absolute;left:1417.5px;top:1954px;width:197.5px;height:79px;box-sizing:border-box;border:2px solid #333;border-radius:40px"></div><div class="t" style="left:1471.0px;top:1978.8px;font-size:30.5px;line-height:30.5px;color:#222;font-weight:400;letter-spacing:1px;">100</div><svg style="position:absolute;left:1546px;top:1982px;" width="30" height="24" viewBox="0 0 30 24"><path d="M6.5 6.5 L15 15 L23.5 6.5" fill="none" stroke="#888" stroke-width="2"/></svg><div class="t" style="left:1632.5px;top:1978.8px;font-size:30.5px;line-height:30.5px;color:#222;font-weight:400;letter-spacing:0.6px;">1&#8211;100 of 172</div><div class="t" style="left:1859.0px;top:1979.3px;font-size:30.5px;line-height:30.5px;color:#222;font-weight:400;letter-spacing:2.1px;">Pages</div><svg style="position:absolute;left:1985px;top:1970px;" width="34" height="48" viewBox="0 0 34 48"><path d="M24.5 6.5 L9 24 L24.5 41.5" fill="none" stroke="#bdbdbd" stroke-width="2.6" stroke-linecap="round" stroke-linejoin="round"/></svg><div style="position:absolute;left:2056.5px;top:1962px;width:63.0px;height:64px;background:#f4f7fa;border-radius:16px"></div><div class="t" style="left:2080.0px;top:1979.3px;font-size:30.5px;line-height:30.5px;color:#222;font-weight:400;letter-spacing:0px;">1</div><div class="t" style="left:2155.5px;top:1979.3px;font-size:30.5px;line-height:30.5px;color:#222;font-weight:400;letter-spacing:0px;">2</div><svg style="position:absolute;left:2233px;top:1970px;" width="34" height="48" viewBox="0 0 34 48"><path d="M9.5 6.5 L25 24 L9.5 41.5" fill="none" stroke="#333" stroke-width="2.6" stroke-linecap="round" stroke-linejoin="round"/></svg>
</div></div>
</body></html>
